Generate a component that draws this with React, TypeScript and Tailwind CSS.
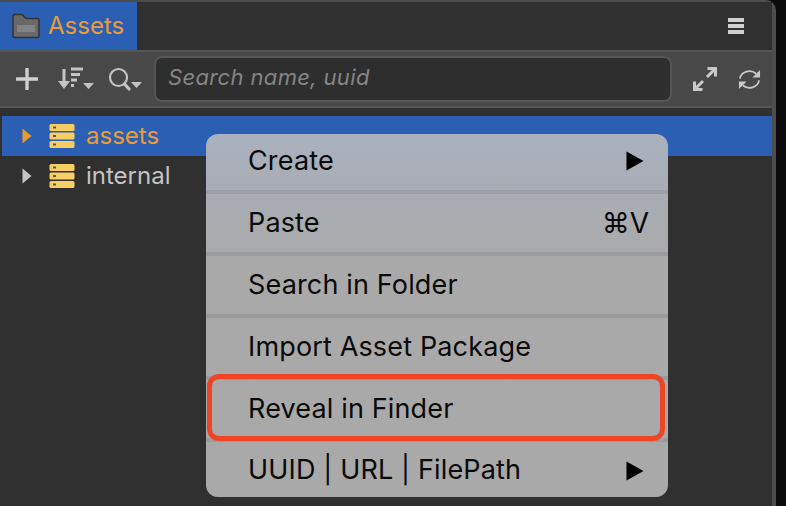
const font = "[font-family:Inter,'Noto_Sans',sans-serif]";

function FolderIcon() {
  return (
    <svg width="28" height="26" viewBox="0 0 28 26" className="shrink-0">
      <path d="M1 3.500a2 2 0 0 1 2-2h7l4 4h11a2 2 0 0 1 2 2v15a2 2 0 0 1-2 2H3a2 2 0 0 1-2-2z" fill="#696969" stroke="#333333" strokeWidth="1.500" />
      <rect x="5" y="12" width="18" height="7" fill="#838383" />
    </svg>
  );
}

function DbIcon() {
  return (
    <svg width="26" height="26" viewBox="0 0 26 26" className="shrink-0">
      <rect x="0.500" y="1" width="25" height="7" rx="1.500" fill="#f6ce66" />
      <rect x="0.500" y="9.500" width="25" height="7" rx="1.500" fill="#f6ce66" />
      <rect x="0.500" y="18" width="25" height="7" rx="1.500" fill="#f6ce66" />
      <rect x="4" y="3.500" width="3" height="2" fill="#5a5a4a" />
      <rect x="4" y="12" width="3" height="2" fill="#5a5a4a" />
      <rect x="4" y="20.500" width="3" height="2" fill="#5a5a4a" />
    </svg>
  );
}

function Caret({ color }: { color: string }) {
  return (
    <svg width="10" height="16" viewBox="0 0 10 16" className="shrink-0">
      <path d="M0.500 0.500L9.500 8L0.500 15.500z" fill={color} />
    </svg>
  );
}

function MenuArrow() {
  return (
    <svg width="18" height="20" viewBox="0 0 18 20">
      <path d="M0.500 0.500L17.500 10L0.500 19.500z" fill="#000" />
    </svg>
  );
}

function Toolbar() {
  return (
    <div className="h-[54px] bg-[#484848] border-y-2 border-[#555555] flex items-center pl-[16px] pr-[11px] box-content">
      <svg width="22" height="22" viewBox="0 0 22 22" className="shrink-0">
        <path d="M11 1v20M1 11h20" stroke="#cfcfcf" strokeWidth="3.400" strokeLinecap="round" />
      </svg>
      <svg width="36" height="24" viewBox="0 0 36 24" className="shrink-0 ml-[20px]">
        <path d="M6 2v17" stroke="#c4c4c4" strokeWidth="3" />
        <path d="M0 14l6 8 6-8z" fill="#c4c4c4" />
        <path d="M13 2h12M13 7.500h9M13 13h6M13 18.500h3" stroke="#c4c4c4" strokeWidth="3" />
        <path d="M25 16h11l-5.500 6z" fill="#c4c4c4" />
      </svg>
      <svg width="36" height="24" viewBox="0 0 36 24" className="shrink-0 ml-[14px]">
        <circle cx="10.500" cy="10.500" r="8.500" fill="none" stroke="#c4c4c4" strokeWidth="2.200" />
        <path d="M16.500 17l4.500 5" stroke="#c4c4c4" strokeWidth="3.200" strokeLinecap="round" />
        <path d="M23 15h11l-5.500 6z" fill="#c4c4c4" />
      </svg>
      <div className="ml-[10px] flex-1 h-[46px] rounded-[8px] bg-[#2e2e2e] border-2 border-[#555555] flex items-center px-[12px] pb-[3px]">
        <span className="italic text-[#858585] text-[22px] tracking-[0.35px]">Search name, uuid</span>
      </div>
      <svg width="24" height="24" viewBox="0 0 24 24" className="shrink-0 ml-[21px]">
        <path d="M14 10L22 2M14.500 1.500h8v8M10 14L2 22M1.500 14.500v8h8" fill="none" stroke="#c8c8c8" strokeWidth="3" />
      </svg>
      <svg width="23" height="23" viewBox="0 0 24 24" className="shrink-0 ml-[21px]">
        <path d="M2 11A10 9 0 0 1 19 6M22 13A10 9 0 0 1 5 18" fill="none" stroke="#c8c8c8" strokeWidth="1.800" />
        <path d="M23 2v8h-8zM1 22v-8h8z" fill="#c8c8c8" />
      </svg>
    </div>
  );
}

function TreeRow({ label, selected }: { label: string; selected?: boolean }) {
  return (
    <div className={`h-[40px] flex items-center pl-[20px] text-[24px] ${selected ? "bg-[#2b5fb3] text-[#eb9c36]" : "text-[#c4c4c4]"}`}>
      <Caret color={selected ? "#e8982f" : "#c4c4c4"} />
      <div className="ml-[17px]">
        <DbIcon />
      </div>
      <span className="ml-[11px]">{label}</span>
    </div>
  );
}

function MenuItem({ label, right, className }: { label: string; right?: React.ReactNode; className: string }) {
  return (
    <div className={`flex items-center justify-between pl-[42px] pr-[24px] box-content ${className}`}>
      <span>{label}</span>
      {right}
    </div>
  );
}

export default function App() {
  return (
    <div className={`w-[786px] h-[506px] bg-[#0b0b0b] overflow-hidden relative ${font}`}>
      <div className="w-[776px] h-full bg-[#303030] border-t-2 border-r-4 border-[#4d4d4d] rounded-tr-[10px] flex flex-col box-border">
        <div className="h-[48px] flex items-stretch justify-between bg-[#303030] shrink-0">
          <div className="w-[137px] bg-[#2b5fb3] flex items-center pl-[12px] gap-[8px] text-[#eb9c36] text-[24px]">
            <FolderIcon />
            <span>Assets</span>
          </div>
          <div className="flex items-center pr-[28px]">
            <div className="w-[16px] flex flex-col gap-[2.500px]">
              <div className="h-[3.500px] bg-[#d0d0d0]" />
              <div className="h-[3.500px] bg-[#d0d0d0]" />
              <div className="h-[3.500px] bg-[#d0d0d0]" />
            </div>
          </div>
        </div>
        <Toolbar />
        <div className="pt-[8px] pl-[2px]">
          <TreeRow label="assets" selected />
          <TreeRow label="internal" />
        </div>
      </div>

      <div className="absolute left-[206px] top-[134px] w-[462px] h-[363px] rounded-[12px] bg-gradient-to-b from-[#a9b1be] to-[#a9a9a9] to-[35%] text-[#0a0a0a] text-[27px] tracking-[0.15px] overflow-hidden flex flex-col">
        <MenuItem className="h-[54px] pb-[2px] border-b-4 border-[#00000014]" label="Create" right={<MenuArrow />} />
        <MenuItem className="h-[58px] border-b-4 border-[#00000014]" label="Paste" right={<span className="mr-[-5px] text-[28px] tracking-normal">⌘V</span>} />
        <MenuItem className="h-[58px] border-b-4 border-[#00000014]" label="Search in Folder" />
        <MenuItem className="h-[58px] border-b-4 border-[#00000014]" label="Import Asset Package" />
        <MenuItem className="h-[58px] border-b-4 border-[#00000014]" label="Reveal in Finder" />
        <MenuItem className="h-[53px] pt-[2px]" label="UUID | URL | FilePath" right={<MenuArrow />} />
      </div>
      <div className="absolute left-[207px] top-[374px] w-[458px] h-[67px] rounded-[12px] border-[5px] border-[#ef4526]" />
    </div>
  );
}
